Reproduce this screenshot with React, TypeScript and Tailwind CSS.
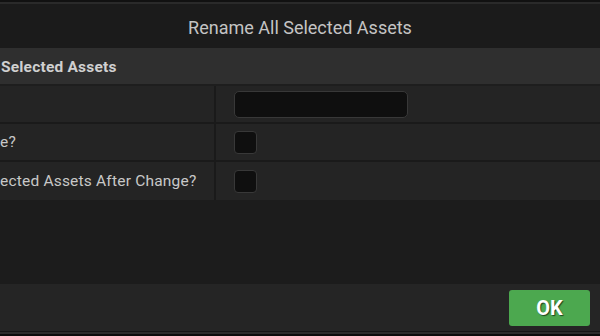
const font = { fontFamily: "Roboto, 'Noto Sans', sans-serif" };

const Row = ({ label, children, last }: { label?: string; children: React.ReactNode; last?: boolean }) => (
  <div className={`flex h-[38px] bg-[#242424] ${last ? "" : "border-b-2 border-[#1a1a1a]"}`}>
    <div className="w-[216px] shrink-0 flex items-center overflow-hidden border-r-2 border-[#1a1a1a] text-[15.5px] tracking-[0.2px] text-[#c8c8c8] whitespace-nowrap pt-[2px]">
      {label}
    </div>
    <div className="flex items-center pl-[18px]">{children}</div>
  </div>
);

const Check = () => (
  <div className="w-[23px] h-[23px] rounded-[4px] bg-[#0f0f0f] border border-[#383838]" />
);

export default function App() {
  return (
    <div className="w-[600px] h-[336px] flex flex-col bg-[#1c1c1c] overflow-hidden" style={font}>
      <div className="h-[2px] bg-[#111111]" />
      <div className="h-[2px] bg-[#2a2a2a]" />
      <div className="h-[44px] bg-[#1b1b1b] flex items-center justify-center text-[18px] text-[#c4c4c4] pt-[3px]">
        Rename All Selected Assets
      </div>
      <div className="h-[38px] bg-[#2f2f2f] border-b-2 border-[#1e1e1e] flex items-center text-[15.5px] tracking-[0.2px] font-bold text-[#d0d0d0] pl-[1px] pt-[3px]">
        Selected Assets
      </div>
      <Row>
        <div className="w-[174px] h-[27px] rounded-[5px] bg-[#0f0f0f] border border-[#383838]" />
      </Row>
      <Row label="e?">
        <Check />
      </Row>
      <Row label="ected Assets After Change?" last>
        <Check />
      </Row>
      <div className="flex-1" />
      <div className="h-[47px] bg-[#252525] flex items-center justify-end pr-[10px]">
        <button className="w-[81px] h-[36px] rounded-[3px] bg-[#4ca84f] text-white text-[20px] font-bold [text-shadow:1px_1px_1px_rgba(0,0,0,0.6)]">
          OK
        </button>
      </div>
      <div className="h-[1px] bg-[#151515]" />
      <div className="h-[2px] bg-[#2c2c2c]" />
      <div className="h-[2px] bg-[#0c0c0c]" />
    </div>
  );
}
